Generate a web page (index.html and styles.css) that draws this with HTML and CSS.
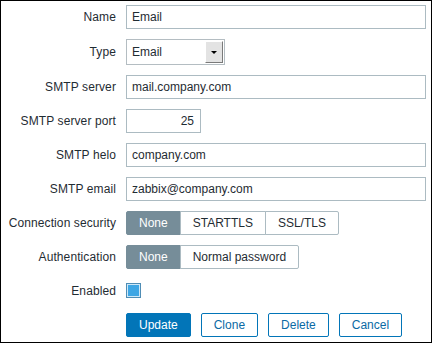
FILE: index.html
```html
<!DOCTYPE html>
<html>
<head>
<meta charset="utf-8">
<link rel="stylesheet" href="styles.css">
</head>
<body>
<div class="frame">
  <div class="form">
    <label class="lbl">Name</label>
    <div class="field"><input class="txt wide" type="text" value="Email"></div>

    <label class="lbl">Type</label>
    <div class="field">
      <div class="select">
        <span class="select-val">Email</span>
        <span class="select-btn"><span class="tri"></span></span>
      </div>
    </div>

    <label class="lbl">SMTP server</label>
    <div class="field"><input class="txt wide" type="text" value="mail.company.com"></div>

    <label class="lbl">SMTP server port</label>
    <div class="field"><input class="txt port" type="text" value="25"></div>

    <label class="lbl">SMTP helo</label>
    <div class="field"><input class="txt wide" type="text" value="company.com"></div>

    <label class="lbl">SMTP email</label>
    <div class="field"><input class="txt wide" type="text" value="zabbix@company.com"></div>

    <label class="lbl">Connection security</label>
    <div class="field">
      <div class="seg">
        <span class="seg-item on">None</span>
        <span class="seg-item">STARTTLS</span>
        <span class="seg-item">SSL/TLS</span>
      </div>
    </div>

    <label class="lbl">Authentication</label>
    <div class="field">
      <div class="seg">
        <span class="seg-item on">None</span>
        <span class="seg-item">Normal password</span>
      </div>
    </div>

    <label class="lbl">Enabled</label>
    <div class="field"><span class="check"></span></div>

    <div class="spacer"></div>
    <div class="field buttons">
      <button class="btn primary">Update</button>
      <button class="btn alt">Clone</button>
      <button class="btn alt">Delete</button>
      <button class="btn alt">Cancel</button>
    </div>
  </div>
</div>
</body>
</html>
```
FILE: styles.css
```css
html, body {
  margin: 0;
  padding: 0;
  background: #fff;
}
body {
  font-family: "Liberation Sans", Arial, sans-serif;
  font-size: 12px;
  color: #1f2c33;
}
.frame {
  box-sizing: border-box;
  width: 432px;
  height: 343px;
  border: 1px solid #000;
  padding: 4px 5px 0 0;
}
.form {
  display: grid;
  grid-template-columns: 115px 1fr;
  column-gap: 10px;
  row-gap: 10px;
  align-items: center;
}
.lbl {
  text-align: right;
  white-space: nowrap;
  line-height: 14px;
  letter-spacing: 0.1px;
}
.field {
  display: flex;
  align-items: center;
  min-height: 24px;
}
.txt {
  box-sizing: border-box;
  height: 24px;
  border: 1px solid #acbbc2;
  border-radius: 0;
  padding: 0 5px;
  margin: 0;
  font: inherit;
  color: #1f2c33;
  background: #fff;
  outline: none;
}
.wide { width: 300px; }
.port { width: 75px; text-align: right; padding-right: 6px; }

.select {
  box-sizing: border-box;
  width: 99px;
  height: 26px;
  border: 1px solid #b4bdc2;
  display: flex;
  align-items: stretch;
  background: #fff;
}
.select-val {
  flex: 1;
  padding-left: 5px;
  display: flex;
  align-items: center;
}
.select-btn {
  box-sizing: border-box;
  width: 18px;
  margin: 1px;
  background: #e3e3e3;
  border-top: 1px solid #fff;
  border-left: 1px solid #fff;
  border-right: 1px solid #7a7a7a;
  border-bottom: 1px solid #7a7a7a;
  display: flex;
  align-items: center;
  justify-content: center;
}
.tri {
  width: 0;
  height: 0;
  border-left: 3px solid transparent;
  border-right: 3px solid transparent;
  border-top: 3px solid #000;
}

.seg {
  display: flex;
}
.seg-item {
  box-sizing: border-box;
  height: 24px;
  display: flex;
  align-items: center;
  padding: 0 12px;
  border: 1px solid #acbbc2;
  margin-left: -1px;
  background: #fff;
  color: #1f2c33;
  white-space: nowrap;
}
.seg-item:first-child {
  margin-left: 0;
  border-radius: 2px 0 0 2px;
}
.seg-item:last-child {
  border-radius: 0 2px 2px 0;
}
.seg-item.on {
  background: #768d99;
  border-color: #768d99;
  color: #fff;
}

.check {
  box-sizing: border-box;
  width: 15px;
  height: 15px;
  border: 1px solid #4f8db5;
  padding: 1px;
  background: #3ea6e4;
  background-clip: content-box;
  box-shadow: inset 0 0 0 1px #cfe8f7;
  margin-bottom: 2px;
}

.buttons {
  gap: 10px;
}
.btn {
  box-sizing: border-box;
  height: 24px;
  padding: 0 12px;
  font: inherit;
  border-radius: 2px;
  border: 1px solid #0275b8;
  margin: 0;
  cursor: pointer;
}
.btn.primary {
  background: #0275b8;
  color: #fff;
}
.btn.alt {
  background: #fff;
  color: #0a6aa4;
}
```
